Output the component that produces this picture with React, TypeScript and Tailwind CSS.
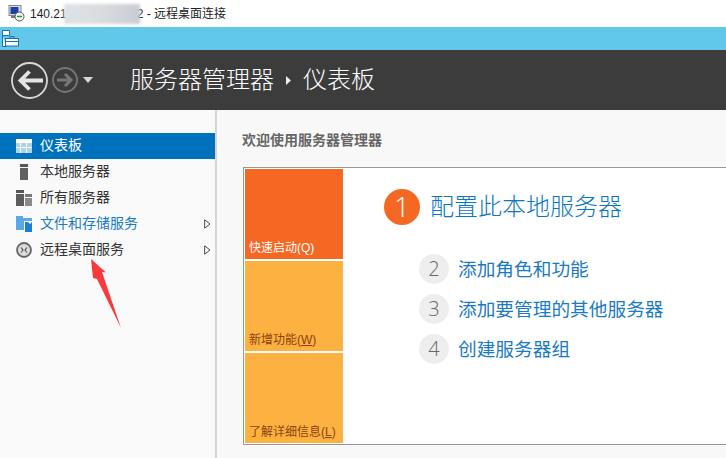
const FONT = "font-['Liberation_Sans','Noto_Sans_CJK_SC',sans-serif]";

function NavIcon({ kind }: { kind: string }) {
  if (kind === "grid") {
    return (
      <svg width="16" height="14" viewBox="0 0 16 14">
        <rect width="16" height="14" fill="#fff" />
        <rect x="0" y="4" width="4" height="4" fill="#a8d4ee" />
        <rect x="5" y="4" width="5" height="4" fill="#a8d4ee" />
        <rect x="11" y="4" width="5" height="4" fill="#a8d4ee" />
        <rect x="0" y="9" width="4" height="5" fill="#a8d4ee" />
        <rect x="5" y="9" width="5" height="5" fill="#a8d4ee" />
        <rect x="11" y="9" width="5" height="5" fill="#a8d4ee" />
      </svg>
    );
  }
  if (kind === "local") {
    return (
      <svg width="16" height="16" viewBox="0 0 16 16">
        <rect x="4" y="0" width="8" height="3" fill="#555" />
        <rect x="4" y="4" width="8" height="12" fill="#606060" />
      </svg>
    );
  }
  if (kind === "all") {
    return (
      <svg width="16" height="16" viewBox="0 0 16 16">
        <rect x="0" y="0" width="8" height="3" fill="#555" />
        <rect x="0" y="4" width="8" height="12" fill="#5c5c5c" />
        <rect x="9" y="4" width="7" height="3" fill="#777" />
        <rect x="9" y="8" width="7" height="8" fill="#8a8a8a" />
      </svg>
    );
  }
  if (kind === "files") {
    return (
      <svg width="16" height="16" viewBox="0 0 16 16">
        <path d="M0 0h7v2h9v3H8v9H0z" fill="#5aa9e2" />
        <path d="M9 6h7v10H9z" fill="#1b80d0" />
        <path d="M12 6h4l-2 2z" fill="#fff" />
      </svg>
    );
  }
  return (
    <svg width="16" height="16" viewBox="0 0 16 16">
      <circle cx="8" cy="8" r="7" fill="#dcdcdc" stroke="#666" strokeWidth="1.800" />
      <path d="M5 5.500 7 8l-2 2.500M11 5.500 9 8l2 2.500" fill="none" stroke="#555" strokeWidth="1.200" />
    </svg>
  );
}

function NavRow({
  icon,
  label,
  active,
  blue,
  arrow,
}: {
  icon: string;
  label: string;
  active?: boolean;
  blue?: boolean;
  arrow?: boolean;
}) {
  const color = active ? "bg-[#0072bc] text-white" : blue ? "text-[#1a7ac4]" : "text-[#333333]";
  return (
    <div className={`flex h-[26px] items-center pl-4 pr-[4px] text-sm ${color}`}>
      <span className="flex w-6 shrink-0 items-center">
        <NavIcon kind={icon} />
      </span>
      <span className="flex-1 pb-[2px]">{label}</span>
      {arrow && (
        <svg width="7" height="10" viewBox="0 0 7 10">
          <path d="M.7.8 6 5 .7 9.200z" fill="#fff" stroke="#444" strokeWidth="1" />
        </svg>
      )}
    </div>
  );
}

function Tile({ label, hot, hotkey }: { label: string; hot?: boolean; hotkey: string }) {
  return (
    <div
      className={`flex h-[90px] items-end px-1 pb-[2px] text-xs leading-[18px] ${
        hot ? "bg-[#f56823] text-white" : "bg-[#fdb141] text-[#8a4310]"
      }`}
    >
      <span>
        {label}(<span className={hot ? "" : "underline"}>{hotkey}</span>)
      </span>
    </div>
  );
}

function Step({ n, label }: { n: number; label: string }) {
  return (
    <div className="flex h-[40px] items-center">
      <span className="flex h-[30px] w-[30px] items-center justify-center rounded-full bg-[#eeeeee] font-['Open_Sans',sans-serif] text-[20px] font-light text-[#666666]">
        {n}
      </span>
      <span className="ml-[9px] pt-[2px] text-[18.700px] leading-6 text-[#1a7ac4]">{label}</span>
    </div>
  );
}

export default function App() {
  return (
    <div className={`relative flex h-[458px] w-[726px] flex-col overflow-hidden bg-[#f8f8f8] ${FONT}`}>
      {/* window title */}
      <div className="flex h-[27px] shrink-0 items-center bg-white pl-2 text-xs text-[#222222]">
        <svg width="17" height="17" viewBox="0 0 17 17" className="mr-[5px]">
          <rect x="1" y="0.500" width="12" height="10" fill="#d8dce4" stroke="#888" />
          <rect x="2.500" y="2" width="8" height="7" fill="#1c3fa8" />
          <rect x="3" y="11" width="7" height="2" fill="#777" />
          <circle cx="11.500" cy="11.500" r="4.500" fill="#f2f2f2" stroke="#555" />
          <path d="M9 11.500h5" stroke="#1a9a3a" strokeWidth="1.500" />
        </svg>
        <span>140.21</span>
        <span className="mx-[-3px] h-[20px] w-[76px] bg-gradient-to-r from-[#dfe2e5] via-[#d9dcdf] to-[#c8cbd0] blur-[1.500px]" />
        <span>2 - 远程桌面连接</span>
      </div>

      {/* remote session strip */}
      <div className="flex h-[23px] shrink-0 items-center bg-[#62c8ea] pl-[2px]">
        <svg width="17" height="17" viewBox="0 0 17 17">
          <path d="M.5.500h7v5h-7zM.5 5.500v11h4" fill="#fff" stroke="#1a6fb8" />
          <rect x="3.500" y="8.500" width="13" height="7.500" fill="#fff" stroke="#1a6fb8" />
          <path d="M3.500 11.500h13M8 8.500v-2h4v2" fill="none" stroke="#1a6fb8" />
        </svg>
      </div>

      {/* header */}
      <div className="flex h-[60px] shrink-0 items-center bg-[#3c3c3c] pl-[11px] text-white">
        <svg width="39" height="39" viewBox="0 0 39 39">
          <circle cx="18.500" cy="19.500" r="17.500" fill="none" stroke="#d8d8d8" strokeWidth="1.800" />
          <path d="M32 19.500H9M18.500 10.500l-9 9 9 9" fill="none" stroke="#e4e4e4" strokeWidth="3.800" />
        </svg>
        <svg width="26" height="26" viewBox="0 0 26 26" className="ml-[2px]">
          <circle cx="13" cy="13" r="12" fill="none" stroke="#777" strokeWidth="1.800" />
          <path d="M5 13h14M13 7l6 6-6 6" fill="none" stroke="#777" strokeWidth="3" />
        </svg>
        <svg width="10" height="6" viewBox="0 0 10 6" className="ml-[5px]">
          <path d="M0 0h10L5 6z" fill="#d8d8d8" />
        </svg>
        <span className="ml-[37px] text-2xl font-light leading-none">服务器管理器</span>
        <svg width="5" height="9" viewBox="0 0 5 9" className="ml-[12px] mr-[12px]">
          <path d="M0 0l5 4.500L0 9z" fill="#eeeeee" />
        </svg>
        <span className="text-2xl font-light leading-none">仪表板</span>
      </div>

      <div className="flex min-h-0 flex-1">
        {/* sidebar */}
        <div className="w-[217px] shrink-0 border-r-2 border-[#d4d4d4] bg-[#f9f9f9] pt-[23px]">
          <NavRow icon="grid" label="仪表板" active />
          <NavRow icon="local" label="本地服务器" />
          <NavRow icon="all" label="所有服务器" />
          <NavRow icon="files" label="文件和存储服务" blue arrow />
          <NavRow icon="rds" label="远程桌面服务" arrow />
        </div>

        {/* main */}
        <div className="min-w-0 flex-1 pl-[25px] pt-[20px]">
          <div className="h-[37px] text-sm font-bold leading-[20px] text-[#666666]">欢迎使用服务器管理器</div>
          <div className="ml-px flex h-[278px] w-[560px] border border-[#999999] bg-white p-[1px]">
            <div className="flex w-[98px] shrink-0 flex-col gap-[2px]">
              <Tile label="快速启动" hotkey="Q" hot />
              <Tile label="新增功能" hotkey="W" />
              <Tile label="了解详细信息" hotkey="L" />
            </div>
            <div className="pl-[41px] pt-[20px]">
              <div className="flex items-center">
                <span className="flex h-9 w-9 items-center justify-center rounded-full bg-[#f56823] font-['Open_Sans',sans-serif] text-[27px] font-light text-white">
                  1
                </span>
                <span className="ml-[10px] text-2xl font-light leading-8 text-[#0b76c4]">配置此本地服务器</span>
              </div>
              <div className="ml-[35px] mt-[24px]">
                <Step n={2} label="添加角色和功能" />
                <Step n={3} label="添加要管理的其他服务器" />
                <Step n={4} label="创建服务器组" />
              </div>
            </div>
          </div>
        </div>
      </div>

      {/* red annotation arrow */}
      <svg width="40" height="76" viewBox="0 0 40 76" className="absolute left-[88px] top-[256px]">
        <path d="M3 3 18 16.500 14 16 33 72 9 23 5 22z" fill="#f93a3a" />
      </svg>
    </div>
  );
}
